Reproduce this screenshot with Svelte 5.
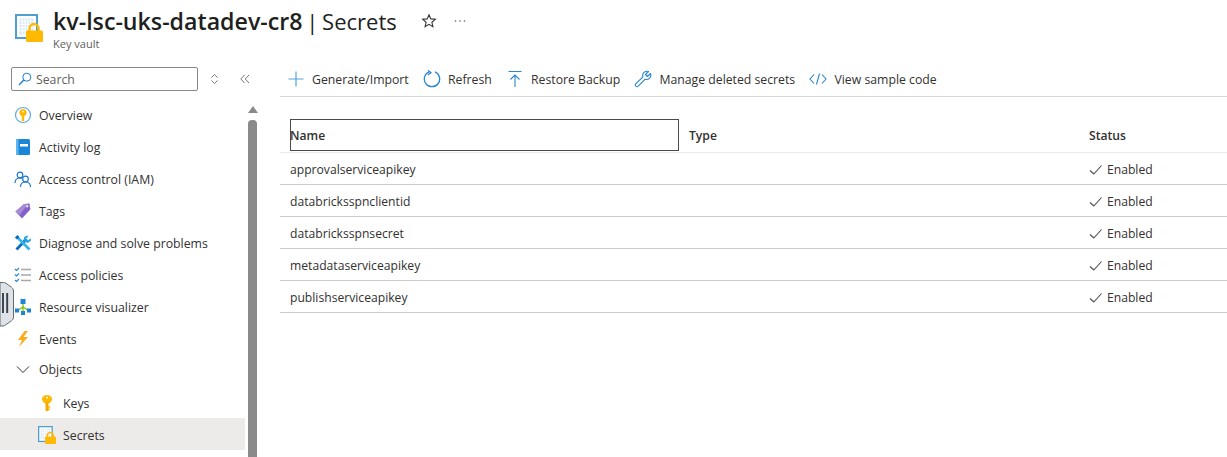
<script>
  const cmds = [
    { id: 'plus', label: 'Generate/Import' },
    { id: 'refresh', label: 'Refresh' },
    { id: 'restore', label: 'Restore Backup' },
    { id: 'wrench', label: 'Manage deleted secrets' },
    { id: 'code', label: 'View sample code' }
  ];
  const secrets = ['approvalserviceapikey', 'databricksspnclientid', 'databricksspnsecret', 'metadataserviceapikey', 'publishserviceapikey'];
  const nav = [
    { id: 'overview', label: 'Overview' },
    { id: 'log', label: 'Activity log' },
    { id: 'iam', label: 'Access control (IAM)' },
    { id: 'tags', label: 'Tags' },
    { id: 'diag', label: 'Diagnose and solve problems' },
    { id: 'policies', label: 'Access policies' },
    { id: 'viz', label: 'Resource visualizer' },
    { id: 'events', label: 'Events' }
  ];
</script>

{#snippet vault(size)}
  <svg width={size} height={size} viewBox="0 0 28 28">
    <rect x="1" y="1" width="21" height="23" fill="#fff" stroke="#4f9fd0" stroke-width="2"/>
    <rect x="4.500" y="4.500" width="14" height="16" fill="#d3e7f6"/>
    <path d="M4.500 7.200h14M4.500 10.400h14M4.500 13.600h14M4.500 16.800h14M7.300 4.500v16M10.100 4.500v16M12.900 4.500v16M15.700 4.500v16" stroke="#fff" stroke-width="1.100"/>
    <path d="M14.500 18v-3.500a4.500 4.500 0 0 1 9 0V18" fill="none" stroke="#ffb900" stroke-width="2.400"/>
    <rect x="11" y="16.500" width="17" height="11.500" rx="1.500" fill="#ffb900"/>
  </svg>
{/snippet}

{#snippet navIcon(id)}
  <svg class="nicon" width="18" height="18" viewBox="0 0 18 18">
    {#if id === 'overview'}
      <circle cx="9" cy="9" r="7.500" fill="#fff" stroke="#5ea9e0" stroke-width="1.200"/>
      <circle cx="9" cy="6.500" r="3.600" fill="#ffb900"/>
      <path d="M9 8v7" stroke="#ffb900" stroke-width="2.400"/>
      <circle cx="9" cy="5.600" r="1" fill="#fff3c4"/>
    {:else if id === 'log'}
      <rect x="2" y="1" width="14" height="16" rx="1.500" fill="#1a86d8"/>
      <rect x="2" y="1" width="2.500" height="16" fill="#5eb4ee"/>
      <rect x="6" y="6" width="8" height="2.500" fill="#fff"/>
    {:else if id === 'iam'}
      <circle cx="6" cy="5" r="2.800" fill="none" stroke="#1a78d0" stroke-width="1.200"/>
      <path d="M1 13c0-3 2-5 5-5 1 0 1.500.2 2 .5" fill="none" stroke="#1a78d0" stroke-width="1.200"/>
      <circle cx="11.500" cy="9" r="2.800" fill="none" stroke="#1a78d0" stroke-width="1.200"/>
      <path d="M6.500 17c0-3 2-5 5-5s5 2 5 5" fill="none" stroke="#1a78d0" stroke-width="1.200"/>
    {:else if id === 'tags'}
      <path d="M1.500 9.500L10 2l5.500-.5.800 6L8 16.500z" fill="#8661c5"/>
      <path d="M1.500 9.500L10 2l4.500-.3L5.500 13z" fill="#a98ad8"/>
      <circle cx="13.300" cy="4.300" r="1.100" fill="#fff"/>
    {:else if id === 'diag'}
      <path d="M2.500 15.500l9-9.500" stroke="#0f6cbd" stroke-width="2.800"/>
      <path d="M10 3.500a3.700 3.700 0 0 0 5 4.800l2-1.800-.3-2.200-2.500 2-2-1.700L14.500 2a4 4 0 0 0-4.500 1.500z" fill="#27a4e0"/>
      <path d="M3 3l12.500 12.500" stroke="#31b5e8" stroke-width="2.600"/>
      <path d="M.8 3.500L3.500 1 5.500 3 3 5.500z" fill="#0f6cbd"/>
    {:else if id === 'policies'}
      <path d="M1 3l1.500 1.500L5 2M1 8.500L2.500 10 5 7.500M1 14l1.500 1.500L5 13" fill="none" stroke="#1a86d8" stroke-width="1.100"/>
      <path d="M7 3.500h10M7 9h10M7 14.500h10" stroke="#a8a8a8" stroke-width="1.500"/>
    {:else if id === 'viz'}
      <path d="M9 4v5M3.500 12.500L9 9l5.500 3.500M9 9v5" fill="none" stroke="#7fba00" stroke-width="1.200"/>
      <rect x="6.500" y="1" width="5" height="5" fill="#1a86d8"/>
      <rect x="1" y="10.500" width="4" height="4" fill="#1a86d8"/>
      <rect x="13" y="10.500" width="4" height="4" fill="#1a86d8"/>
      <rect x="7" y="13" width="4" height="4" fill="#1a86d8"/>
    {:else if id === 'events'}
      <path d="M10.500 1L4 10h4l-3 7 9-10h-4.500L14 1z" fill="#fcab1f"/>
    {:else if id === 'key'}
      <ellipse cx="9" cy="5.200" rx="5" ry="4.200" fill="#ffb900"/>
      <path d="M9 8v9" stroke="#f5a800" stroke-width="3"/>
      <path d="M10 13h2.200M10 15.300h1.800" stroke="#ffb900" stroke-width="1.400"/>
      <circle cx="9" cy="3.600" r="1.100" fill="#fff3c4"/>
    {/if}
  </svg>
{/snippet}

<div class="page">
  <header class="head">
    <div class="logo">{@render vault(28)}</div>
    <div class="titles">
      <div class="titleline">
        <h1><strong>kv-lsc-uks-datadev-cr8</strong> <span class="bar">|</span> Secrets</h1>
        <svg class="star" width="16" height="16" viewBox="0 0 16 16">
          <path d="M8 1.800l1.800 4.100 4.500.4-3.400 3 1 4.400L8 11.400l-3.900 2.300 1-4.400-3.400-3 4.500-.4z" fill="none" stroke="#323130" stroke-width="1.100"/>
        </svg>
        <svg class="more" width="12" height="4" viewBox="0 0 12 4">
          <circle cx="1.500" cy="2" r=".8" fill="#605e5c"/>
          <circle cx="6" cy="2" r=".8" fill="#605e5c"/>
          <circle cx="10.500" cy="2" r=".8" fill="#605e5c"/>
        </svg>
      </div>
      <div class="sub">Key vault</div>
    </div>
  </header>

  <div class="body">
    <aside class="side">
      <div class="searchrow">
        <div class="search">
          <svg width="14" height="14" viewBox="0 0 14 14">
            <circle cx="8.800" cy="5.200" r="4" fill="none" stroke="#1a78d0" stroke-width="1"/>
            <path d="M5.800 8L1 13" stroke="#1a78d0" stroke-width="1.200"/>
          </svg>
          <span>Search</span>
        </div>
        <svg class="updown" width="9" height="12" viewBox="0 0 9 12">
          <path d="M1.500 4.500L4.500 1.500 7.500 4.500M1.500 7.500L4.500 10.500 7.500 7.500" fill="none" stroke="#777" stroke-width="1"/>
        </svg>
        <svg class="dbl" width="10" height="10" viewBox="0 0 10 10">
          <path d="M4.500 1L.8 5l3.700 4M9 1L5.300 5 9 9" fill="none" stroke="#777" stroke-width="1"/>
        </svg>
      </div>
      <div class="navwrap">
        <nav class="nav">
          {#each nav as item}
            <div class="item">
              {@render navIcon(item.id)}
              <span>{item.label}</span>
            </div>
          {/each}
          <div class="item group">
            <svg class="nicon" width="18" height="18" viewBox="0 0 18 18">
              <path d="M3 6.500l6 6 6-6" fill="none" stroke="#323130" stroke-width="1"/>
            </svg>
            <span>Objects</span>
          </div>
          <div class="item child first">
            {@render navIcon('key')}
            <span>Keys</span>
          </div>
          <div class="item child sel">
            <span class="nicon">{@render vault(18)}</span>
            <span>Secrets</span>
          </div>
        </nav>
        <div class="scroll">
          <svg class="arrow" width="10" height="7" viewBox="0 0 10 7"><path d="M5 0l5 7H0z" fill="#8a8a8a"/></svg>
          <div class="thumb"></div>
        </div>
      </div>
    </aside>

    <main class="main">
      <div class="toolbar">
        {#each cmds as c}
          <div class="cmd">
            <svg width="18" height="18" viewBox="0 0 18 18" fill="none" stroke="#2a86d0" stroke-width="1.100">
              {#if c.id === 'plus'}
                <path d="M9 1.500v15M1.500 9h15" stroke="#4fa3e0" stroke-width="1.200"/>
              {:else if c.id === 'refresh'}
                <path d="M12 1.900a7.700 7.700 0 1 1-5.800-.1" stroke-width="1.300"/>
                <path d="M5 .3L8 2.800 4.800 5" stroke-width="1.200"/>
              {:else if c.id === 'restore'}
                <path d="M2.500 1.500h13M9 5v12M4.500 9.500L9 5l4.500 4.500"/>
              {:else if c.id === 'wrench'}
                <path d="M16.500 3.500l-3 3-2-2 3-3a4.300 4.300 0 0 0-5.600 5.300L1.800 13.800a1.700 1.700 0 0 0 2.400 2.400l7-7a4.300 4.300 0 0 0 5.300-5.700z" stroke-linejoin="round"/>
              {:else}
                <path d="M5 4.500L1 9l4 4.500M13 4.500L17 9l-4 4.500M10.500 3.500L7.500 14.500"/>
              {/if}
            </svg>
            <span>{c.label}</span>
          </div>
        {/each}
      </div>

      <div class="table">
        <div class="row headrow">
          <div class="cell name focus">Name</div>
          <div class="cell type">Type</div>
          <div class="cell status">Status</div>
        </div>
        {#each secrets as s}
          <div class="row">
            <div class="cell name">{s}</div>
            <div class="cell type"></div>
            <div class="cell status">
              <svg width="14" height="14" viewBox="0 0 14 14"><path d="M1 7.500L4.800 11l7.700-8.500" fill="none" stroke="#4f4d4b" stroke-width="1.100"/></svg>
              <span>Enabled</span>
            </div>
          </div>
        {/each}
      </div>
    </main>
  </div>

  <div class="grab" aria-hidden="true">
    <svg width="14" height="46" viewBox="0 0 14 46">
      <path d="M0 .5h3.500c1 0 1.500.2 2.500.8l5.500 4c1.300 1 2 2 2 3.700v26c0 1.800-.7 2.800-2 3.700l-6 4.300c-.8.600-1.500 1-2.500 1H0z" fill="#dfe3e8" stroke="#5f6b76" stroke-width="1"/>
      <path d="M3 11v20M7.200 11v20" stroke="#37414b" stroke-width="1.900"/>
    </svg>
  </div>
</div>

<style>
  :global(body) { margin: 0; background: #fff; }
  .page {
    position: relative;
    width: 1227px;
    height: 457px;
    overflow: hidden;
    font-family: "Open Sans", "Noto Sans", sans-serif;
    font-size: 12.25px;
    color: #323130;
    background: #fff;
  }
  .head { display: flex; height: 60px; padding-left: 15px; box-sizing: border-box; }
  .logo { padding-top: 14px; width: 38px; }
  .logo svg { display: block; }
  .titles { padding-top: 4px; }
  .titleline { display: flex; align-items: center; height: 33px; }
  h1 { margin: 0; font-size: 22px; font-weight: 400; white-space: nowrap; color: #201f1e; word-spacing: -2px; }
  h1 strong { font-weight: 600; font-size: 23.200px; }
  .star { margin-left: 24px; }
  .more { margin-left: 17px; display: block; }
  .sub { font-size: 11px; color: #605e5c; line-height: 14px; }

  .body { display: flex; height: 397px; }
  .side { width: 258px; flex: none; display: flex; flex-direction: column; }
  .searchrow { display: flex; align-items: center; height: 39px; padding: 0 0 1px 11px; box-sizing: border-box; }
  .search {
    width: 187px; height: 24px; box-sizing: border-box;
    border: 1px solid #8a8886; border-radius: 2px;
    display: flex; align-items: center; padding-left: 6px; gap: 4px; color: #605e5c;
  }
  .updown { margin-left: 12px; }
  .dbl { margin-left: 21px; }
  .navwrap { display: flex; flex: 1; min-height: 0; }
  .nav { width: 245px; flex: none; font-size: 12.300px; }
  .item { display: flex; align-items: center; height: 32px; box-sizing: border-box; padding-left: 14px; gap: 7px; white-space: nowrap; }
  .nicon { display: block; flex: none; width: 18px; height: 18px; }
  .group { height: 28px; }
  .first { margin-top: 4px; }
  .child { padding-left: 38px; }
  .sel { background: #edebe9; margin-top: -1px; padding-top: 2px; }
  .scroll { margin-left: 3px; width: 9px; display: flex; flex-direction: column; align-items: center; }
  .arrow { margin-top: 7px; flex: none; }
  .thumb { margin-top: 7px; flex: 1; width: 9px; background: #8a8a8a; border-radius: 4px 4px 0 0; }

  .main { flex: 1; min-width: 0; padding-left: 22px; }
  .toolbar {
    display: flex; align-items: center; height: 37px; box-sizing: border-box;
    border-bottom: 1px solid #d8d6d4; padding: 2px 0 0 7px; gap: 14.250px; white-space: nowrap;
  }
  .cmd { display: flex; align-items: center; gap: 7px; }
  .table { margin-top: 22px; font-size: 12.150px; }
  .row { display: flex; height: 32px; box-sizing: border-box; border-bottom: 1px solid #cfcdcb; align-items: center; padding-top: 2px; }
  .headrow { height: 34px; border-bottom-color: #edebe9; align-items: flex-start; padding-top: 0; }
  .headrow .cell { font-weight: 600; height: 32px; display: flex; align-items: center; }
  .cell { box-sizing: border-box; padding-left: 10px; }
  .name { width: 399px; }
  .type { width: 400px; }
  .status { display: flex; align-items: center; gap: 4px; }
  .focus { outline: 1px solid #4a4a4a; outline-offset: -1px; padding-left: 0; margin-left: 10px; width: 389px; }
  .grab { position: absolute; left: 0; top: 282px; }
  .grab svg { display: block; }
</style>
